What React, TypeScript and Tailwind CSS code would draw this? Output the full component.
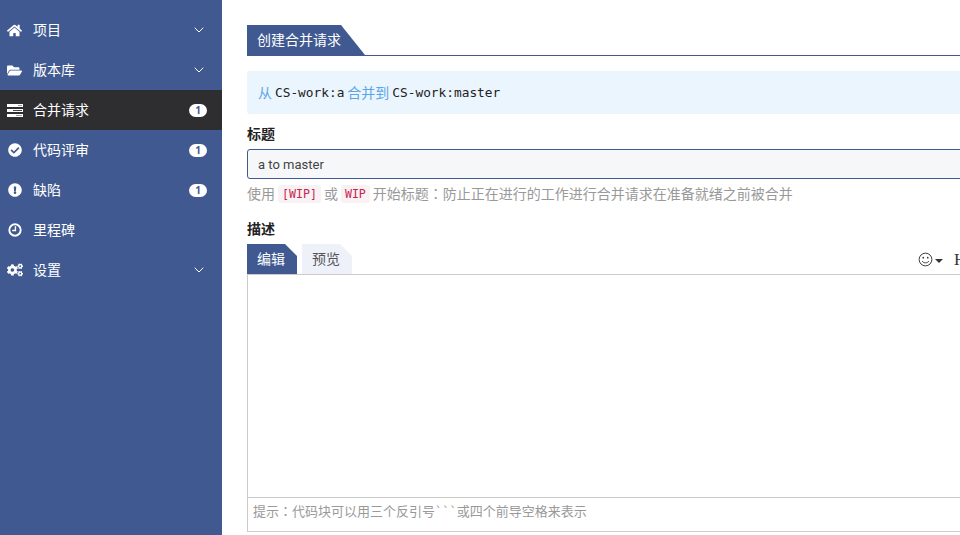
import React from "react";
import { ChevronDown } from "lucide-react";
import {
  FaHome,
  FaFolderOpen,
  FaCheckCircle,
  FaExclamationCircle,
  FaCogs,
} from "react-icons/fa";

const TasksIcon = ({ className }: { className?: string }) => (
  <svg viewBox="0 0 16 13" className={className}>
    <path fill="#fff" d="M0 0h16v3H0zM0 5h16v3H0zM0 10h16v3H0z" />
    <path fill="#9a9a9a" d="M11 1h4v1h-4zM9 11h6v1H9z" />
    <path fill="#444" d="M6 6h9v1H6z" />
  </svg>
);

const ClockIcon = ({ className }: { className?: string }) => (
  <svg viewBox="0 0 16 16" className={className} fill="none" stroke="#fff">
    <circle cx="8" cy="8" r="6.5" strokeWidth="2.2" />
    <path d="M8.5 3.6v5H4.8" strokeWidth="1.6" />
  </svg>
);

const navItems = [
  { label: "项目", icon: <FaHome className="w-[15px] h-[15px]" />, arrow: true },
  { label: "版本库", icon: <FaFolderOpen className="w-[15px] h-[15px]" />, arrow: true },
  { label: "合并请求", icon: <TasksIcon className="w-4 h-[13px]" />, badge: "1", active: true },
  { label: "代码评审", icon: <FaCheckCircle className="w-[14px] h-[14px] ml-[1px]" />, badge: "1" },
  { label: "缺陷", icon: <FaExclamationCircle className="w-[14px] h-[14px] ml-[1px]" />, badge: "1" },
  { label: "里程碑", icon: <ClockIcon className="w-[14px] h-[14px] ml-[1px]" /> },
  { label: "设置", icon: <FaCogs className="w-4 h-4" />, arrow: true },
];

const Sidebar = () => (
  <aside className="w-[222px] shrink-0 h-full bg-[#405a91] pt-[10px] text-white">
    {navItems.map((item) => (
      <div
        key={item.label}
        className={`h-10 flex items-center pl-[7px] pr-[15px] text-[14px] ${
          item.active ? "bg-[#2e2e30]" : ""
        }`}
      >
        <span className="w-[26px] flex items-center">{item.icon}</span>
        <span className="flex-1 pb-[2px]">{item.label}</span>
        {item.arrow && <ChevronDown className="w-4 h-4 mr-0" strokeWidth={1.5} />}
        {item.badge && (
          <span className="w-[18px] h-[13px] rounded-full bg-white text-[#405a91] text-[10px] font-bold flex items-center justify-center">
            {item.badge}
          </span>
        )}
      </div>
    ))}
  </aside>
);

const mono = "font-['DejaVu_Sans_Mono','Liberation_Mono',monospace]";
const colon = "font-['Noto_Sans_CJK_TC',sans-serif]";

export default function App() {
  return (
    <div className="w-[960px] h-[535px] flex overflow-hidden bg-white font-['Open_Sans','Noto_Sans_CJK_SC',sans-serif] text-[14px] text-[#333]">
      <Sidebar />
      <main className="w-[760px] shrink-0 pl-[25px] pt-[25px]">
        <div className="border-b border-[#405a91] h-[31px]">
          <div className="w-[118px] h-[30px] pl-[10px] pb-[2px] flex items-center bg-[#405a91] text-white [clip-path:polygon(0_0,94px_0,100%_100%,0_100%)]">
            创建合并请求
          </div>
        </div>

        <div className="mt-[15px] h-[43px] rounded-[3px] bg-[#ebf5fe] pl-[11px] flex items-center text-[#5aa5e8] gap-[3px]">
          <span>从</span>
          <code className={`${mono} text-[12.8px] text-[#222]`}>CS-work:a</code>
          <span>合并到</span>
          <code className={`${mono} text-[12.8px] text-[#222]`}>CS-work:master</code>
        </div>

        <label className="block mt-[10px] font-bold text-[#222] leading-[20px]">标题</label>
        <div className="mt-[5px] h-[30px] border border-[#405a91] rounded-[3px] bg-[#f6f7f9] pl-[10px] pt-[1px] flex items-center text-[13px] text-[#444] font-['Roboto',sans-serif]">
          a to master
        </div>
        <p className="mt-[5px] h-[20px] flex items-center text-[#999] gap-[3px]">
          <span className="pb-[2px]">使用</span>
          <code className={`${mono} text-[11.6px] text-[#c7254e] bg-[#f9f2f4] rounded-[3px] px-[4px] h-[18px] leading-[18px]`}>
            [WIP]
          </code>
          <span className="pb-[2px]">或</span>
          <code className={`${mono} text-[11.6px] text-[#c7254e] bg-[#f9f2f4] rounded-[3px] px-[4px] h-[18px] leading-[18px]`}>
            WIP
          </code>
          <span className="pb-[2px]">
            开始标题<span className={colon}>：</span>防止正在进行的工作进行合并请求在准备就绪之前被合并
          </span>
        </p>

        <label className="block mt-[15px] font-bold text-[#222] leading-[20px]">描述</label>
        <div className="mt-[5px] h-[30px] flex items-end gap-[5px] relative">
          <div className="w-[50px] h-[30px] pl-[10px] pb-[2px] flex items-center bg-[#405a91] text-white [clip-path:polygon(0_0,38px_0,100%_12px,100%_100%,0_100%)]">
            编辑
          </div>
          <div className="w-[50px] h-[30px] pl-[10px] pb-[2px] flex items-center bg-[#eef1fa] text-[#555] [clip-path:polygon(0_0,38px_0,100%_12px,100%_100%,0_100%)]">
            预览
          </div>
          <div className="absolute left-[671px] top-[7px] flex items-center text-[#333]">
            <svg viewBox="0 0 16 16" className="w-[15px] h-[15px]" fill="none" stroke="#333">
              <circle cx="8" cy="8" r="6.8" />
              <circle cx="5.6" cy="6" r="0.9" fill="#333" stroke="none" />
              <circle cx="10.4" cy="6" r="0.9" fill="#333" stroke="none" />
              <path d="M4.5 9.6c1 2.6 6 2.6 7 0" />
            </svg>
            <span className="ml-[2px] mt-[2px] w-0 h-0 border-x-[4px] border-x-transparent border-t-[4px] border-t-[#333]" />
            <span className="ml-[11px] font-['Liberation_Serif',serif] text-[17px] leading-none">H</span>
          </div>
        </div>
        <div className="border border-[#ccc] h-[258px] flex flex-col">
          <div className="flex-1" />
          <div className="h-[34px] border-t border-[#ccc] pl-[5px] pt-[4px] text-[13px] text-[#999] leading-[17px]">
            提示<span className={colon}>：</span>代码块可以用三个反引号
            <span className={`${mono} text-[12px]`}>```</span>
            或四个前导空格来表示
          </div>
        </div>
      </main>
    </div>
  );
}
